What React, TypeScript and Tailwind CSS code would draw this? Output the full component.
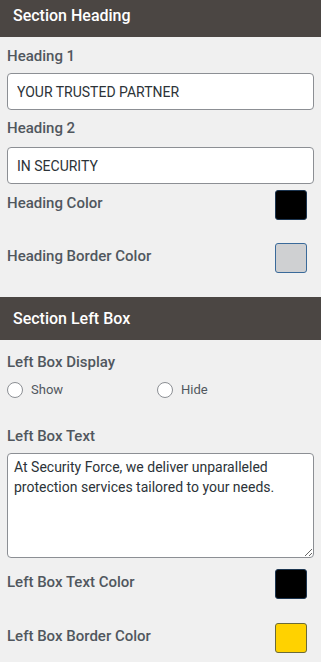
import React, { useState } from "react";

const font = { fontFamily: "Roboto, 'Noto Sans', sans-serif" };

const SectionHeader = ({ title, className }: { title: string; className?: string }) => (
  <div className={`flex items-center bg-[#4b4643] pl-[13px] text-[16px] font-medium text-white ${className ?? ""}`}>
    {title}
  </div>
);

const Label = ({ children, className }: { children: React.ReactNode; className?: string }) => (
  <div className={`px-[7px] text-[15px] leading-[20px] font-medium text-[#50575e] ${className ?? ""}`}>{children}</div>
);

const ColorRow = ({
  label,
  color,
  border,
  className,
}: {
  label: string;
  color: string;
  border: string;
  className?: string;
}) => (
  <div className={`flex h-[30px] items-center justify-between pl-[7px] pr-[14px] ${className ?? ""}`}>
    <span className="mt-[-3px] text-[15px] font-medium text-[#50575e]">{label}</span>
    <div className="h-[30px] w-[32px] rounded-[3px] border" style={{ backgroundColor: color, borderColor: border }} />
  </div>
);

export default function App() {
  const [display, setDisplay] = useState<string | null>(null);

  return (
    <div className="min-h-[662px] w-[321px] bg-[#f0f0f0] pb-[10px]" style={font}>
      <SectionHeader title="Section Heading" className="h-[37px] pb-[6px]" />

      <Label className="mt-[9px]">Heading 1</Label>
      <div className="mx-[7px] mt-[7px]">
        <input
          defaultValue="YOUR TRUSTED PARTNER"
          className="h-[37px] w-full rounded-[4px] border border-[#8c8f94] bg-white px-[9px] text-[14px] text-[#2c3338] outline-none"
        />
      </div>

      <Label className="mt-[8px]">Heading 2</Label>
      <div className="mx-[7px] mt-[9px]">
        <input
          defaultValue="IN SECURITY"
          className="h-[37px] w-full rounded-[4px] border border-[#8c8f94] bg-white px-[9px] text-[14px] text-[#2c3338] outline-none"
        />
      </div>

      <ColorRow label="Heading Color" color="#000000" border="#1c3550" className="mt-[6px]" />
      <ColorRow label="Heading Border Color" color="#cfd0d2" border="#3a6a9a" className="mt-[23px]" />

      <SectionHeader title="Section Left Box" className="mt-[24px] h-[43px]" />

      <Label className="mt-[12px]">Left Box Display</Label>
      <div className="mt-[10px] flex h-[16px] items-center px-[7px] text-[13px] text-[#50575e]">
        <label className="flex w-[150px] items-center gap-[8px]">
          <input
            type="radio"
            name="display"
            checked={display === "show"}
            onChange={() => setDisplay("show")}
            className="h-[16px] w-[16px] appearance-none rounded-full border border-[#8c8f94] bg-white"
          />
          Show
        </label>
        <label className="flex items-center gap-[8px]">
          <input
            type="radio"
            name="display"
            checked={display === "hide"}
            onChange={() => setDisplay("hide")}
            className="h-[16px] w-[16px] appearance-none rounded-full border border-[#8c8f94] bg-white"
          />
          Hide
        </label>
      </div>

      <Label className="mt-[28px]">Left Box Text</Label>
      <div className="mx-[7px] mt-[7px]">
        <textarea
          defaultValue="At Security Force, we deliver unparalleled protection services tailored to your needs."
          className="block h-[105px] w-full rounded-[4px] border border-[#8c8f94] bg-white px-[6px] py-[3px] text-[14px] leading-[20px] text-[#2c3338] outline-none"
        />
      </div>

      <ColorRow label="Left Box Text Color" color="#000000" border="#1c3550" className="mt-[11px]" />
      <ColorRow label="Left Box Border Color" color="#ffd200" border="#6b6b3a" className="mt-[24px]" />
    </div>
  );
}
